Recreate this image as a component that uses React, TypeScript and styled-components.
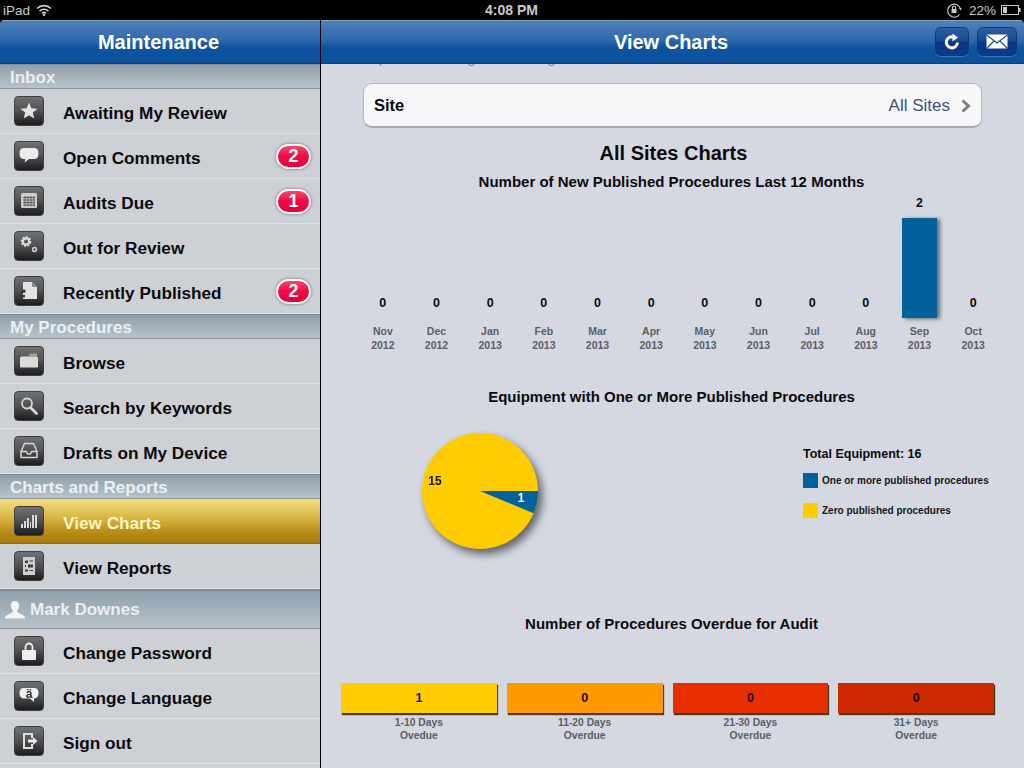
import React from "react";
import styled, { createGlobalStyle } from "styled-components";

const GlobalStyle = createGlobalStyle`
  html, body {
    margin: 0;
    padding: 0;
    background: #000;
  }
  body {
    font-family: "Liberation Sans", Arial, sans-serif;
  }
`;

// Styled Components
const Screen = styled.div`
  width: 1024px;
  height: 768px;
  overflow: hidden;
  display: flex;
  flex-direction: column;
  background: #000;
`;

const StatusBar = styled.div`
  height: 20px;
  flex: none;
  display: grid;
  grid-template-columns: 1fr auto 1fr;
  align-items: center;
  padding: 0 3px;
  color: #c9c9cc;
  font-size: 13.5px;
`;

const StatusLeft = styled.div`
  display: flex;
  align-items: center;
  gap: 6px;
`;

const StatusRight = styled.div`
  display: flex;
  align-items: center;
  justify-content: flex-end;
  gap: 5px;
`;

const Clock = styled.div`
  font-weight: bold;
  font-size: 14px;
  padding-right: 1px;
`;

const Panes = styled.div`
  flex: 1;
  display: flex;
  min-height: 0;
`;

const Sidebar = styled.div`
  width: 320px;
  flex: none;
  background: #cdd0d5;
  border-radius: 5px 0 0 0;
  overflow: hidden;
  display: flex;
  flex-direction: column;
`;

const Main = styled.div`
  margin-left: 1px;
  flex: 1;
  background: #d5d8e0;
  border-radius: 0 5px 0 0;
  overflow: hidden;
  display: flex;
  flex-direction: column;
`;

const NavBar = styled.div`
  height: 44px;
  flex: none;
  position: relative;
  z-index: 1;
  box-sizing: border-box;
  display: flex;
  align-items: center;
  justify-content: center;
  padding-right: 3px;
  border-top: 1px solid #7ea4cc;
  border-bottom: 1px solid #0a3f80;
  background: linear-gradient(#5180b7 0%, #2f69ad 45%, #0f549f 62%, #0a4f9b 100%);
  color: #fff;
  font-weight: bold;
  font-size: 20px;
`;

const NavActions = styled.div`
  position: absolute;
  top: 6px;
  right: 7px;
  display: flex;
  gap: 8px;
`;

const NavButton = styled.div<{ $width: number }>`
  width: ${(p) => p.$width}px;
  height: 29px;
  box-sizing: border-box;
  display: flex;
  align-items: center;
  justify-content: center;
  border-radius: 6px;
  border: 1px solid #0e3a78;
  background: linear-gradient(#2c5e9f 0%, #174b90 48%, #0a3585 52%, #0c3a8a 100%);
  box-shadow: 0 1px 0 rgba(255, 255, 255, 0.2);
`;

const Section = styled.div<{ $height?: number }>`
  height: ${(p) => p.$height ?? 25}px;
  flex: none;
  box-sizing: border-box;
  display: flex;
  align-items: center;
  gap: 4px;
  padding: 2px 10px 0;
  border-top: 1px solid #7f8e9b;
  border-bottom: 1px solid #8c959d;
  background: linear-gradient(#8fa0ad, #b9c2c9);
  color: #ecf0f3;
  font-weight: bold;
  font-size: 17px;
`;

const UserSection = styled(Section)`
  padding: 0 4px;
  border-top-width: 2px;
`;

const Row = styled.div<{ $active?: boolean }>`
  height: 45px;
  flex: none;
  box-sizing: border-box;
  display: flex;
  align-items: center;
  padding: 0 9px 0 14px;
  border-bottom: 1px solid ${(p) => (p.$active ? "#8f6b0c" : "#dfe1e4")};
  background: ${(p) =>
    p.$active ? "linear-gradient(#f5df7f 0%, #d6b341 45%, #b98d17 75%, #a67a0b 100%)" : "#cdd0d5"};
  color: ${(p) => (p.$active ? "#fff6c4" : "#0b0b0d")};
  font-weight: bold;
  font-size: 17.2px;
`;

const IconTile = styled.div`
  width: 30px;
  height: 30px;
  flex: none;
  margin-right: 19px;
  display: flex;
  align-items: center;
  justify-content: center;
  box-sizing: border-box;
  border-radius: 4px;
  border: 1px solid #3f3f41;
  background: linear-gradient(#707173 0%, #4f5052 50%, #1d1d1e 100%);
`;

const RowLabel = styled.div`
  flex: 1;
  padding-top: 4px;
`;

const Badge = styled.div`
  width: 35px;
  height: 25px;
  box-sizing: border-box;
  display: flex;
  align-items: center;
  justify-content: center;
  border-radius: 13px;
  border: 2px solid #fbf3f5;
  background: linear-gradient(#f64a6d 0%, #ee0f45 45%, #e6003a 100%);
  box-shadow: 0 0 3px rgba(60, 20, 30, 0.6);
  color: #fff;
  font-size: 18px;
`;

const Body = styled.div`
  flex: 1;
  display: flex;
  flex-direction: column;
  min-height: 0;
  position: relative;
`;

const ClippedHint = styled.div`
  position: absolute;
  top: -15px;
  left: 42px;
  color: #8b8f98;
  font-size: 15px;
`;

const SiteCell = styled.div`
  margin: 19px 42px 0;
  height: 45px;
  box-sizing: border-box;
  display: flex;
  align-items: center;
  justify-content: space-between;
  padding: 1px 10px 0;
  border-radius: 9px;
  border: 1px solid #b4b6bb;
  border-bottom: 2px solid #a8aaaf;
  background: #f7f7f9;
  font-size: 17px;
`;

const SiteLabel = styled.div`
  font-weight: bold;
  font-size: 16.5px;
  color: #0b0b0d;
`;

const SiteValue = styled.div`
  display: flex;
  align-items: center;
  gap: 11px;
  color: #3d5284;
`;

const PageTitle = styled.div`
  margin-top: 13px;
  line-height: 24px;
  text-align: center;
  font-weight: bold;
  font-size: 20px;
  color: #0b0b0d;
  padding-left: 2px;
`;

const ChartTitle = styled.div<{ $top: number }>`
  margin-top: ${(p) => p.$top}px;
  line-height: 18px;
  text-align: center;
  font-weight: bold;
  font-size: 15px;
  color: #0b0b0d;
  padding-right: 2px;
`;

const BarChart = styled.div`
  height: 127px;
  margin: 0 24px 0 35px;
  display: grid;
  grid-template-columns: repeat(12, 1fr);
`;

const BarColumn = styled.div`
  display: flex;
  flex-direction: column;
  align-items: center;
  justify-content: flex-end;
`;

const BarValue = styled.div`
  line-height: 16px;
  margin-bottom: 7px;
  font-weight: bold;
  font-size: 12.5px;
  color: #0b0b0d;
`;

const Bar = styled.div<{ $height: number }>`
  width: 35px;
  height: ${(p) => p.$height}px;
  background: #00619b;
  box-shadow: ${(p) => (p.$height ? "3px 1px 4px rgba(40, 45, 55, 0.65)" : "none")};
`;

const AxisRow = styled.div`
  margin: 6px 24px 0 35px;
  display: grid;
  grid-template-columns: repeat(12, 1fr);
`;

const AxisLabel = styled.div`
  line-height: 14px;
  text-align: center;
  white-space: pre-line;
  font-weight: bold;
  font-size: 10.5px;
  color: #5a5e66;
`;

const PieRow = styled.div`
  margin: 20px 0 0 94px;
  display: flex;
  align-items: flex-start;
`;

const PieSvg = styled.svg`
  display: block;
  overflow: visible;
  filter: drop-shadow(4px 5px 4px rgba(30, 30, 40, 0.65));
`;

const Legend = styled.div`
  margin: 20px 0 0 258px;
  display: flex;
  flex-direction: column;
`;

const LegendTitle = styled.div`
  line-height: 16px;
  margin-bottom: 11px;
  font-weight: bold;
  font-size: 12.5px;
  color: #0b0b0d;
`;

const LegendItem = styled.div`
  display: flex;
  align-items: center;
  gap: 4px;
  margin-bottom: 15px;
  line-height: 15px;
  font-weight: bold;
  font-size: 10px;
  color: #15161a;
`;

const Swatch = styled.div<{ $color: string }>`
  width: 15px;
  height: 15px;
  background: ${(p) => p.$color};
`;

const OverdueGrid = styled.div`
  margin: 50px 30px 0 20px;
  display: grid;
  grid-template-columns: repeat(4, 1fr);
  column-gap: 10px;
`;

const OverdueCell = styled.div`
  display: flex;
  flex-direction: column;
`;

const OverdueBar = styled.div<{ $color: string }>`
  height: 30px;
  display: flex;
  align-items: center;
  justify-content: center;
  background: ${(p) => p.$color};
  box-shadow: 1px 2px 1px rgba(50, 30, 0, 0.85);
  font-weight: bold;
  font-size: 12.5px;
  color: #14100a;
`;

const OverdueLabel = styled.div`
  margin-top: 3px;
  line-height: 13px;
  text-align: center;
  white-space: pre-line;
  font-weight: bold;
  font-size: 10.3px;
  color: #5a5e66;
`;

// icons drawn to match the tile glyphs
const Glyph = ({ children }: { children: React.ReactNode }) => (
  <svg width="22" height="22" viewBox="0 0 22 22" fill="#dcdcdc">
    {children}
  </svg>
);

const icons: Record<string, React.ReactNode> = {
  star: <polygon points="11,2.5 13.4,8.3 19.5,8.7 14.8,12.6 16.3,18.6 11,15.3 5.7,18.6 7.2,12.6 2.5,8.7 8.6,8.3" fill="#e4e4e4" />,
  comment: <path d="M6 3h10c3 0 4.500 1.800 4.500 5.500S19 14 16 14h-5l-4.500 3.500.8-3.500H6C3 14 1.500 12.200 1.500 8.500S3 3 6 3z" fill="#ececec" />,
  calendar: (
    <>
      <rect x="3" y="3" width="16" height="15" rx="1.500" fill="#cfcfcf" />
      <path d="M5 7.500h12M5 10h12M5 12.500h12M5 15h12M7 6v10.500M10 6v10.500M13 6v10.500M16 6v10.500" stroke="#555" strokeWidth="0.9" />
    </>
  ),
  gears: (
    <>
      <circle cx="8" cy="6.500" r="4" fill="none" stroke="#dcdcdc" strokeWidth="2.600" strokeDasharray="2 1" />
      <circle cx="8" cy="6.500" r="3" fill="none" stroke="#dcdcdc" strokeWidth="1.800" />
      <circle cx="16.500" cy="14.500" r="1.900" fill="none" stroke="#cfcfcf" strokeWidth="1.500" />
    </>
  ),
  document: (
    <>
      <path d="M5 2h9l5 5v12H5z" fill="#e2e2e2" />
      <path d="M14 2l5 5h-5z" fill="#8a8a8a" />
      <path d="M2.500 12a3 3 0 0 1 5.500-1.200L6.800 13a1 1 0 0 0-1.800 .500zM4.500 15H7v2.500H4.500z" fill="#3c3c3c" />
    </>
  ),
  folder: (
    <>
      <path d="M3 6h8l1-2.500h7V7H3z" fill="#a3a3a3" />
      <rect x="2" y="7" width="18" height="10.500" rx="1" fill="#dedbd6" />
    </>
  ),
  search: (
    <>
      <circle cx="9" cy="8.500" r="5" fill="none" stroke="#d6d6d6" strokeWidth="1.800" />
      <path d="M12.500 12.500l6 6" stroke="#d6d6d6" strokeWidth="2.800" strokeLinecap="round" />
    </>
  ),
  tray: (
    <path d="M6.500 3.500h9l3.500 8v6H3v-6zM3.500 11.500h5l1 2.500h3l1-2.500h5" fill="none" stroke="#d6d6d6" strokeWidth="1.500" strokeLinejoin="round" />
  ),
  chart: (
    <path d="M3 14h2v4H3zM6 11h2v7H6zM9 8h2v10H9zM12 12h1v6h-1zM14 5h2v13h-2zM17 5h2v13h-2z" fill="#d8d8d8" />
  ),
  report: (
    <>
      <rect x="5" y="2" width="12" height="18" fill="#cfcfcf" />
      <path d="M7 5.500h3v2.500H7zM11.500 5.500H15v1h-3.500zM7 10h1v2H7zM10 9.500h5v3h-5zM7 14.500h3v2H7zM11.500 15H15v1h-3.500z" fill="#3d3d3d" />
    </>
  ),
  lock: (
    <>
      <path d="M7.500 10V7a3.500 3.500 0 0 1 7 0v3" fill="none" stroke="#efefef" strokeWidth="1.800" />
      <rect x="4" y="10" width="14" height="10" rx="0.800" fill="#efefef" />
    </>
  ),
  language: (
    <>
      <path d="M6 3h10c3 0 4.500 1.800 4.500 5s-1.500 5.500-4.500 5.500v3.500l-4-3.500H6c-3 0-4.500-2.300-4.500-5.500S3 3 6 3z" fill="#f0f0f0" />
      <text x="11" y="12.500" textAnchor="middle" fontSize="12" fontFamily="Liberation Sans, sans-serif" fill="#333">ä</text>
    </>
  ),
  signout: (
    <>
      <path d="M5 3h10v5h-2V5H7v12h6v-3h2v5H5z" fill="#e0e0e0" />
      <path d="M10 9.500h5V7l4.500 4-4.500 4v-2.500h-5z" fill="#e8e8e8" />
    </>
  ),
};

const groups = [
  {
    title: "Inbox",
    rows: [
      { label: "Awaiting My Review", icon: "star" },
      { label: "Open Comments", icon: "comment", badge: 2 },
      { label: "Audits Due", icon: "calendar", badge: 1 },
      { label: "Out for Review", icon: "gears" },
      { label: "Recently Published", icon: "document", badge: 2 },
    ],
  },
  {
    title: "My Procedures",
    rows: [
      { label: "Browse", icon: "folder" },
      { label: "Search by Keywords", icon: "search" },
      { label: "Drafts on My Device", icon: "tray" },
    ],
  },
  {
    title: "Charts and Reports",
    rows: [
      { label: "View Charts", icon: "chart", active: true },
      { label: "View Reports", icon: "report" },
    ],
  },
];

const accountRows = [
  { label: "Change Password", icon: "lock" },
  { label: "Change Language", icon: "language" },
  { label: "Sign out", icon: "signout" },
];

const months = [
  ["Nov", "2012", 0],
  ["Dec", "2012", 0],
  ["Jan", "2013", 0],
  ["Feb", "2013", 0],
  ["Mar", "2013", 0],
  ["Apr", "2013", 0],
  ["May", "2013", 0],
  ["Jun", "2013", 0],
  ["Jul", "2013", 0],
  ["Aug", "2013", 0],
  ["Sep", "2013", 2],
  ["Oct", "2013", 0],
] as const;

const overdue = [
  { value: 1, color: "#ffcc00", label: "1-10 Days\nOvedue" },
  { value: 0, color: "#ff9900", label: "11-20 Days\nOverdue" },
  { value: 0, color: "#e62e00", label: "21-30 Days\nOverdue" },
  { value: 0, color: "#cc2900", label: "31+ Days\nOverdue" },
];

type NavRow = { label: string; icon: string; badge?: number; active?: boolean };

const MenuRow = ({ row }: { row: NavRow }) => (
  <Row $active={row.active}>
    <IconTile>
      <Glyph>{icons[row.icon]}</Glyph>
    </IconTile>
    <RowLabel>{row.label}</RowLabel>
    {row.badge ? <Badge>{row.badge}</Badge> : null}
  </Row>
);

const App = () => {
  return (
    <Screen>
      <GlobalStyle />
      <StatusBar>
        <StatusLeft>
          iPad
          <svg width="16" height="12" viewBox="0 0 16 12" fill="none" stroke="#c9c9cc" strokeWidth="1.600">
            <path d="M1 4.500a10 10 0 0 1 14 0" />
            <path d="M3.500 7a6.500 6.500 0 0 1 9 0" />
            <path d="M6 9.300a3 3 0 0 1 4 0" />
            <circle cx="8" cy="10.800" r="0.500" />
          </svg>
        </StatusLeft>
        <Clock>4:08 PM</Clock>
        <StatusRight>
          <svg width="18" height="16" viewBox="0 0 18 16" fill="none" stroke="#c9c9cc" strokeWidth="1.100">
            <path d="M13.500 12.500A6.500 6.500 0 1 1 14.500 7" />
            <path d="M12.800 6.500l1.700 1.800 1.700-1.800z" fill="#c9c9cc" stroke="none" />
            <rect x="5.500" y="7" width="5" height="4" fill="#c9c9cc" stroke="none" />
            <path d="M6.500 7V5.500a1.500 1.500 0 0 1 3 0V7" />
          </svg>
          <span>22%</span>
          <svg width="20" height="10" viewBox="0 0 20 10">
            <rect x="0.500" y="0.500" width="17" height="9" fill="none" stroke="#c9c9cc" />
            <rect x="2" y="2" width="4" height="6" fill="#c9c9cc" />
            <rect x="18" y="3" width="1.500" height="4" fill="#c9c9cc" />
          </svg>
        </StatusRight>
      </StatusBar>
      <Panes>
        <Sidebar>
          <NavBar>Maintenance</NavBar>
          {groups.map((group) => (
            <React.Fragment key={group.title}>
              <Section>{group.title}</Section>
              {group.rows.map((row) => (
                <MenuRow key={row.label} row={row} />
              ))}
            </React.Fragment>
          ))}
          <UserSection $height={40}>
            <svg width="22" height="22" viewBox="0 0 22 22" fill="#f2f4f5">
              <path d="M11 2c2.800 0 4.200 2 4.200 4.500 0 2.200-1 4-2 5v1.500c1.500 1.200 5.800 2.500 7.800 5v1.500H1v-1.500c2-2.500 6.300-3.800 7.800-5v-1.500c-1-1-2-2.800-2-5C6.800 4 8.200 2 11 2z" />
            </svg>
            Mark Downes
          </UserSection>
          {accountRows.map((row) => (
            <MenuRow key={row.label} row={row} />
          ))}
        </Sidebar>
        <Main>
          <NavBar>
            View Charts
            <NavActions>
              <NavButton $width={34}>
                <svg width="18" height="18" viewBox="0 0 18 18" fill="none">
                  <path d="M11.500 4.300A5.600 5.600 0 1 0 14.500 9.500" stroke="#fff" strokeWidth="3" />
                  <path d="M9.500 0.500L15 4.500l-5.500 4z" fill="#fff" />
                </svg>
              </NavButton>
              <NavButton $width={40}>
                <svg width="22" height="15" viewBox="0 0 22 15">
                  <rect x="0.500" y="0.500" width="21" height="14" rx="1" fill="#fff" />
                  <path d="M0.500 1l10.500 8 10.500-8M0.500 14.500l7.500-7.500M21.500 14.500l-7.500-7.500" fill="none" stroke="#1c4a8c" strokeWidth="1.100" />
                </svg>
              </NavButton>
            </NavActions>
          </NavBar>
          <Body>
            <ClippedHint>Tap on a bar to go to a listing</ClippedHint>
            <SiteCell>
              <SiteLabel>Site</SiteLabel>
              <SiteValue>
                All Sites
                <svg width="10" height="14" viewBox="0 0 10 14" fill="none" stroke="#7f7f82" strokeWidth="3">
                  <path d="M1.500 1.500L7.500 7l-6 5.500" />
                </svg>
              </SiteValue>
            </SiteCell>
            <PageTitle>All Sites Charts</PageTitle>
            <ChartTitle $top={8}>Number of New Published Procedures Last 12 Months</ChartTitle>
            <BarChart>
              {months.map(([month, year, value]) => (
                <BarColumn key={month + year}>
                  <BarValue>{value}</BarValue>
                  <Bar $height={value * 50} />
                </BarColumn>
              ))}
            </BarChart>
            <AxisRow>
              {months.map(([month, year]) => (
                <AxisLabel key={month + year}>{`${month}\n${year}`}</AxisLabel>
              ))}
            </AxisRow>
            <ChartTitle $top={36}>Equipment with One or More Published Procedures</ChartTitle>
            <PieRow>
              <PieSvg width="130" height="130" viewBox="0 0 130 130">
                <circle cx="65" cy="65" r="58" fill="#ffcc00" />
                <path d="M65 65H123A58 58 0 0 1 118.600 87.200Z" fill="#00619b" />
                <text x="20" y="59" textAnchor="middle" fontSize="12" fontWeight="bold" fill="#111">15</text>
                <text x="106" y="76" textAnchor="middle" fontSize="12" fontWeight="bold" fill="#fff">1</text>
              </PieSvg>
              <Legend>
                <LegendTitle>Total Equipment: 16</LegendTitle>
                <LegendItem>
                  <Swatch $color="#00619b" />
                  One or more published procedures
                </LegendItem>
                <LegendItem>
                  <Swatch $color="#ffcc00" />
                  Zero published procedures
                </LegendItem>
              </Legend>
            </PieRow>
            <ChartTitle $top={59}>Number of Procedures Overdue for Audit</ChartTitle>
            <OverdueGrid>
              {overdue.map((item) => (
                <OverdueCell key={item.label}>
                  <OverdueBar $color={item.color}>{item.value}</OverdueBar>
                  <OverdueLabel>{item.label}</OverdueLabel>
                </OverdueCell>
              ))}
            </OverdueGrid>
          </Body>
        </Main>
      </Panes>
    </Screen>
  );
};

export default App;
